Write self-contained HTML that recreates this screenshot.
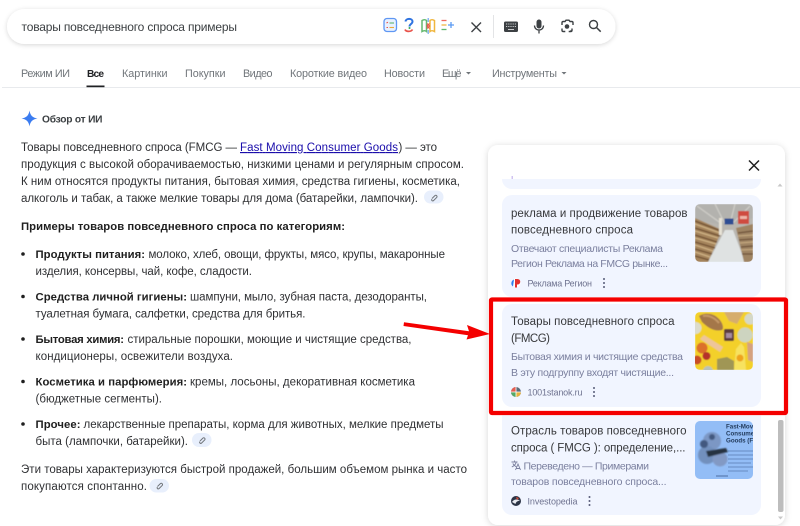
<!DOCTYPE html>
<html lang="ru"><head><meta charset="utf-8"><title>товары повседневного спроса примеры</title>
<style>
html,body{margin:0;padding:0;background:#fff;width:800px;height:526px;overflow:hidden}
svg{display:block;position:absolute;left:0;top:0;filter:blur(.3px)}
text{font-family:"Liberation Sans",sans-serif;white-space:pre}
.s{font-size:12px;fill:#3c4043}
.t{font-size:10.8px;fill:#70757a}
.b{font-size:11.5px;fill:#2f3033}
.h{font-size:11.3px;fill:#1f1f1f;font-weight:700}
.c{font-size:11.5px;fill:#37383b}
.d{font-size:10.5px;fill:#7a7f9e}
.o{font-size:9px;fill:#6f7390}
</style></head><body>
<svg width="800" height="526" viewBox="0 0 800 526" xmlns="http://www.w3.org/2000/svg">
<defs>
<filter id="sh" x="-10%" y="-30%" width="120%" height="170%"><feDropShadow dx="0" dy="1" stdDeviation="2.500" flood-color="#000" flood-opacity=".16"/></filter>
<filter id="sh2" x="-10%" y="-10%" width="120%" height="120%"><feDropShadow dx="0" dy="1" stdDeviation="3.500" flood-color="#000" flood-opacity=".16"/></filter>
<filter id="bl"><feGaussianBlur stdDeviation=".7"/></filter>
<filter id="bs"><feGaussianBlur stdDeviation=".45"/></filter>
<clipPath id="c1"><rect x="695" y="204" width="58" height="58" rx="5"/></clipPath>
<clipPath id="c2"><rect x="695" y="312" width="58" height="58" rx="5"/></clipPath>
<clipPath id="c3"><rect x="695" y="421" width="58" height="58" rx="5"/></clipPath>
<clipPath id="c0"><rect x="488" y="179" width="297" height="346"/></clipPath>
</defs>
<rect width="800" height="526" fill="#fff"/>

<!-- search bar -->
<rect x="7" y="9" width="608.500" height="35" rx="17.500" fill="#fff" filter="url(#sh)"/>
<text class="s" x="21.500" y="31" textLength="215.500">товары повседневного спроса примеры</text>

<!-- AI chips -->
<rect x="384" y="18.500" width="12.500" height="13" rx="3" fill="#e8f1ff" stroke="#5f97f3" stroke-width="1.300"/>
<path d="M386.500 23l1.500-.8M386.500 27.500h1.500" stroke="#e8574d" stroke-width="1.100" fill="none"/>
<path d="M389.500 23h4.500" stroke="#5fb36e" stroke-width="1.100" fill="none"/>
<path d="M389.500 27.500h4.500" stroke="#e9a93a" stroke-width="1.100" fill="none"/>
<path d="M405.500 21.500c.3-3.500 7-3.500 7 0 0 2.500-3 2.500-3 5" fill="none" stroke="#2f73e0" stroke-width="2"/>
<path d="M405 29.500c1 2.500 6 2.500 7.500 0" fill="none" stroke="#e8524a" stroke-width="1.700"/>
<circle cx="409.500" cy="28" r="1" fill="#34a853"/>
<path d="M422 20.500c2-1.200 3-1.200 4.500 0v11c-1.500-1.200-2.500-1.200-4.500 0z" fill="none" stroke="#65b96f" stroke-width="1.500"/>
<path d="M434.500 20.500c-2-1.200-3-1.200-4.500 0v11c1.500-1.200 2.500-1.200 4.500 0z" fill="none" stroke="#f0b63e" stroke-width="1.500"/>
<path d="M427 23.500l2.500 2.500-2.500 2.500M429.500 23.500l-2.500 2.500 2.500 2.500" fill="none" stroke="#e8574d" stroke-width="1.200"/>
<path d="M428.200 18v4M428.200 30v4" stroke="#6ea6f5" stroke-width="1.200"/>
<path d="M441.500 20.500h5" stroke="#ef6a5e" stroke-width="1.300"/>
<path d="M441.500 25h5" stroke="#f1b845" stroke-width="1.300"/>
<path d="M441.500 29.500h5" stroke="#5fb86d" stroke-width="1.300"/>
<path d="M448 25h6M451 22v6" stroke="#5a9bf3" stroke-width="1.300"/>

<!-- right controls -->
<path d="M471.500 22.500l9.500 9.500M481 22.500l-9.500 9.500" stroke="#3c4043" stroke-width="1.400"/>
<path d="M493.500 15v23" stroke="#e3e4e6" stroke-width="1"/>
<rect x="504" y="21.500" width="14" height="10.500" rx="1.500" fill="#3c4043"/>
<path d="M506 24h10M506 26.500h10" stroke="#c9cacc" stroke-width="1" stroke-dasharray="1 .8"/>
<path d="M508 29.500h6" stroke="#c9cacc" stroke-width="1"/>
<rect x="536.500" y="19.500" width="5" height="9" rx="2.500" fill="#3c4043"/>
<path d="M534.500 25.500c0 6 9 6 9 0M539 30.500v3" fill="none" stroke="#3c4043" stroke-width="1.300"/>
<path d="M562 25v-2.200c0-.7.500-1.300 1.300-1.300h1.700l1-1.300h3l1 1.300h1.700c.8 0 1.300.6 1.300 1.300v2.200M562 28.500v1.700c0 .8.500 1.300 1.300 1.300h2M572 28.500v1.700c0 .8-.5 1.300-1.300 1.300h-2" fill="none" stroke="#3c4043" stroke-width="1.400"/>
<circle cx="567" cy="26.500" r="2.300" fill="#3c4043"/>
<circle cx="571" cy="31" r=".9" fill="#3c4043"/>
<circle cx="593.500" cy="24.500" r="4" fill="none" stroke="#3c4043" stroke-width="1.400"/>
<path d="M596.500 27.500l4.200 4.200" stroke="#3c4043" stroke-width="1.500"/>

<!-- tabs -->
<text class="t" x="21" y="77" textLength="49">Режим ИИ</text>
<text x="87" y="77" textLength="17" style="font-size:10.200px;fill:#202124;font-weight:700">Все</text>
<text class="t" x="122" y="77" textLength="45.500">Картинки</text>
<text class="t" x="185" y="77" textLength="40.500">Покупки</text>
<text class="t" x="243" y="77" textLength="29.500">Видео</text>
<text class="t" x="290" y="77" textLength="77">Короткие видео</text>
<text class="t" x="384" y="77" textLength="41">Новости</text>
<text class="t" x="442" y="77" textLength="19.500">Ещё</text>
<path d="M466 72h5l-2.500 2.500z" fill="#70757a"/>
<text class="t" x="492" y="77" textLength="65">Инструменты</text>
<path d="M561.500 72h5l-2.500 2.500z" fill="#70757a"/>
<path d="M2 87.500H800" stroke="#e8eaed" stroke-width="1"/>
<rect x="86.500" y="85.500" width="18" height="1.700" fill="#202124"/>

<!-- AI overview -->
<path d="M29.500 110.500C30.300 115.500 32.500 117.700 37.500 118.500 32.500 119.300 30.300 121.500 29.500 126.500 28.700 121.500 26.500 119.300 21.500 118.500 26.500 117.700 28.700 115.500 29.500 110.500z" fill="#3b7cf0"/>
<text x="42" y="122.500" textLength="60.500" style="font-size:10.200px;font-weight:700;fill:#3c4043">Обзор от ИИ</text>

<!-- body -->
<text class="b" x="21" y="151" textLength="216">Товары повседневного спроса (FMCG —</text>
<text class="b" x="240" y="151" textLength="158" style="fill:#1a0dab" text-decoration="underline">Fast Moving Consumer Goods</text>
<text class="b" x="398.500" y="151" textLength="38.500">) — это</text>
<text class="b" x="21" y="168" textLength="443">продукция с высокой оборачиваемостью, низкими ценами и регулярным спросом.</text>
<text class="b" x="21" y="185" textLength="439">К ним относятся продукты питания, бытовая химия, средства гигиены, косметика,</text>
<text class="b" x="21" y="202" textLength="397">алкоголь и табак, а также мелкие товары для дома (батарейки, лампочки).</text>
<rect x="424" y="190.500" width="19.500" height="13" rx="6.500" fill="#e8effc"/>
<path d="M432 198.500l3-3a1.300 1.300 0 0 1 1.800 1.800l-3.300 3.300a1 1 0 0 1-1.500-1.500" fill="none" stroke="#70757a" stroke-width="1"/>

<text class="h" x="21" y="230" textLength="324">Примеры товаров повседневного спроса по категориям:</text>

<circle cx="23" cy="254" r="1.800" fill="#1f1f1f"/>
<text class="h" x="35.500" y="258" textLength="109.500">Продукты питания:</text>
<text class="b" x="148.500" y="258" textLength="296.500">молоко, хлеб, овощи, фрукты, мясо, крупы, макаронные</text>
<text class="b" x="35.500" y="275" textLength="216.500">изделия, консервы, чай, кофе, сладости.</text>

<circle cx="23" cy="296.500" r="1.800" fill="#1f1f1f"/>
<text class="h" x="35.500" y="300.500" textLength="151.500">Средства личной гигиены:</text>
<text class="b" x="190" y="300.500" textLength="237">шампуни, мыло, зубная паста, дезодоранты,</text>
<text class="b" x="35.500" y="317.500" textLength="270">туалетная бумага, салфетки, средства для бритья.</text>

<circle cx="23" cy="339" r="1.800" fill="#1f1f1f"/>
<text class="h" x="35.500" y="343" textLength="88.500">Бытовая химия:</text>
<text class="b" x="127.500" y="343" textLength="284">стиральные порошки, моющие и чистящие средства,</text>
<text class="b" x="35.500" y="360" textLength="197.500">кондиционеры, освежители воздуха.</text>

<circle cx="23" cy="381.500" r="1.800" fill="#1f1f1f"/>
<text class="h" x="35.500" y="385.500" textLength="151.500">Косметика и парфюмерия:</text>
<text class="b" x="190" y="385.500" textLength="225">кремы, лосьоны, декоративная косметика</text>
<text class="b" x="35.500" y="402.500" textLength="126.500">(бюджетные сегменты).</text>

<circle cx="23" cy="424" r="1.800" fill="#1f1f1f"/>
<text class="h" x="35.500" y="428" textLength="45">Прочее:</text>
<text class="b" x="83.500" y="428" textLength="360">лекарственные препараты, корма для животных, мелкие предметы</text>
<text class="b" x="35.500" y="445" textLength="152.500">быта (лампочки, батарейки).</text>
<rect x="192" y="433" width="19.500" height="14" rx="7" fill="#e8effc"/>
<path d="M200 441l3-3a1.300 1.300 0 0 1 1.800 1.800l-3.300 3.300a1 1 0 0 1-1.500-1.500" fill="none" stroke="#70757a" stroke-width="1"/>

<text class="b" x="21" y="473" textLength="446">Эти товары характеризуются быстрой продажей, большим объемом рынка и часто</text>
<text class="b" x="21" y="490" textLength="126">покупаются спонтанно.</text>
<rect x="149.500" y="479" width="19.500" height="13.500" rx="6.700" fill="#e8effc"/>
<path d="M157.500 486.500l3-3a1.300 1.300 0 0 1 1.800 1.800l-3.300 3.300a1 1 0 0 1-1.500-1.500" fill="none" stroke="#70757a" stroke-width="1"/>

<!-- panel -->
<rect x="488" y="145" width="297" height="380" rx="10" fill="#fff" filter="url(#sh2)"/>
<path d="M749 160.500l10 10M759 160.500l-10 10" stroke="#1f1f1f" stroke-width="1.500"/>

<!-- cards -->
<g clip-path="url(#c0)">
<rect x="502" y="150" width="259" height="39" rx="10" fill="#f1f5ff"/>
</g>
<rect x="511.500" y="176" width="1.500" height="3" fill="#cbbcf0" opacity=".9"/>
<path d="M780 183.500l-2.500 3h5z" fill="#c8c8c8"/>

<!-- card 2 -->
<rect x="502" y="195" width="259" height="102" rx="10" fill="#f1f5ff"/>
<text class="c" x="511" y="217" textLength="176.500">реклама и продвижение товаров</text>
<text class="c" x="511" y="233.500" textLength="122">повседневного спроса</text>
<text class="d" x="511" y="252" textLength="152">Отвечают специалисты Реклама</text>
<text class="d" x="511" y="267" textLength="157">Регион Реклама на FMCG рынке...</text>
<circle cx="516" cy="283" r="4.500" fill="#fff"/>
<path d="M514 279.500a4 4 0 0 0-1 7z" fill="#2f80ed"/>
<path d="M515 279h2.500a2.500 2.500 0 0 1 0 5.500H517v3h-2z" fill="#e3312d"/>
<text class="o" x="527.500" y="286.500" textLength="64.500">Реклама Регион</text>
<g fill="#565a78"><circle cx="604" cy="279" r="1"/><circle cx="604" cy="283" r="1"/><circle cx="604" cy="287" r="1"/></g>
<g clip-path="url(#c1)">
<g filter="url(#bs)">
<rect x="695" y="204" width="58" height="58" fill="#b9b6b0"/>
<path d="M695 204h58v14l-24 8-34-6z" fill="#b3b2ae"/>
<path d="M697 206l25 18M715 204l10 20M735 204l-5 20M750 206l-18 18" stroke="#cfcdc8" stroke-width="1.200"/>
<path d="M708 262l17-32h8l12 32z" fill="#dfe2e2"/>
<path d="M695 218l27 12-14 32h-13z" fill="#a5845c"/>
<path d="M695 221l26 10M695 228l25 8M695 235l22 7M695 242l20 6M695 249l17 5M695 256l14 4" stroke="#6f4f32" stroke-width="1.300"/>
<path d="M695 224l25 9M695 231l23 7M695 238l21 6M695 245l18 6M695 252l15 5" stroke="#d5b98b" stroke-width="1.100"/>
<path d="M736 228l17-4v38h-9z" fill="#9f8464"/>
<path d="M738 233l15-2M739 240l14-1M741 247l12-1M742 254l11 0" stroke="#6d5139" stroke-width="1.300"/>
<path d="M738 236l15-1M740 243l13-1M741 250l12-.5" stroke="#c9ad83" stroke-width="1.100"/>
<rect x="719" y="218" width="3" height="17" fill="#e7e2d6"/>
<rect x="724.500" y="218.500" width="9" height="6" fill="#2d4d93"/>
<rect x="738" y="211" width="11" height="13" fill="#cf4b3f"/>
<rect x="740" y="216" width="7" height="3" fill="#eeb5a8"/>
</g>
</g>

<!-- red box -->
<rect x="491" y="299.500" width="295" height="113.500" fill="#fff" stroke="#f40000" stroke-width="4.200" rx="1"/>
<rect x="502" y="304" width="259" height="103" rx="10" fill="#f1f5ff"/>
<text class="c" x="511" y="325" textLength="163.500">Товары повседневного спроса</text>
<text class="c" x="511" y="342" textLength="39">(FMCG)</text>
<text class="d" x="511" y="360" textLength="172">Бытовая химия и чистящие средства</text>
<text class="d" x="511" y="376" textLength="163">В эту подгруппу входят чистящие...</text>
<circle cx="516" cy="392" r="5" fill="#5d6d7b"/>
<path d="M511 392a5 5 0 0 1 5-5v5z" fill="#e65c4f"/><path d="M516 392h5a5 5 0 0 1-5 5z" fill="#e8b23e"/><path d="M516 392v5a5 5 0 0 1-5-5z" fill="#56a866"/>
<path d="M511 392h10M516 387v10" stroke="#fff" stroke-width=".8"/>
<text class="o" x="527.500" y="395.500" textLength="55">1001stanok.ru</text>
<g fill="#565a78"><circle cx="594" cy="388" r="1"/><circle cx="594" cy="392" r="1"/><circle cx="594" cy="396" r="1"/></g>
<g clip-path="url(#c2)">
<g filter="url(#bs)">
<rect x="695" y="312" width="58" height="58" fill="#f3d02a"/>
<path d="M699 316c4-3 14-4 20 3 4 4 5 10 3 11-7 2-14-2-20-8z" fill="#a47748"/>
<path d="M703 316c5-1 11 1 16 7" stroke="#c69a68" stroke-width="2" fill="none"/>
<path d="M724 312h20l-7 12-8-3z" fill="#d6ad6d"/>
<circle cx="750" cy="319" r="5.500" fill="#d5d8c8"/>
<circle cx="695.500" cy="328" r="6" fill="#dcdccc"/>
<rect x="724" y="329" width="10" height="12" rx="1.500" fill="#5d3c3a"/>
<rect x="726" y="333" width="6" height="5" fill="#a58aa0"/>
<circle cx="745" cy="335" r="7.500" fill="#cdd4c0"/>
<path d="M704 335l19 12-3 5-20-13z" fill="#eec59a"/>
<circle cx="702" cy="348" r="5.500" fill="#dc6f2c"/>
<circle cx="706.500" cy="356" r="4" fill="#b5322a"/>
<circle cx="697" cy="360" r="4.500" fill="#c84d28"/>
<path d="M717 359l10-2 7 4v9h-17z" fill="#a09655"/>
<path d="M736 349l5-6 3 4 2 23h-12z" fill="#f7e25f"/>
<circle cx="740" cy="358" r="3.500" fill="#efa31a"/>
<path d="M747 342l6 2v18l-5-2z" fill="#d5a27f"/>
<circle cx="708" cy="371" r="5" fill="#b9c2b8"/>
</g>
</g>

<!-- card 4 -->
<g clip-path="url(#c0)">
<path d="M502 415.500h259V505a10 10 0 0 1-10 10H512a10 10 0 0 1-10-10z" fill="#f1f5ff"/>
</g>
<text class="c" x="511" y="434.500" textLength="175.500">Отрасль товаров повседневного</text>
<text class="c" x="511" y="451.500" textLength="174.500">спроса ( FMCG ): определение,...</text>
<g fill="none" stroke="#7a7f9e" stroke-width=".9"><path d="M511.500 462h6M514.500 460.500v1.500M516.300 462c-.5 2.500-2.500 4-4.500 5M512.800 463.500c.8 1.500 2 2.500 3.500 3.300"/><path d="M515.500 470l2.500-6 2.500 6M516.300 468.500h3.500"/></g>
<text class="d" x="523.500" y="469.500" textLength="125.500">Переведено — Примерами</text>
<text class="d" x="511" y="485" textLength="155.500">товаров повседневного спроса...</text>
<circle cx="516" cy="501" r="5" fill="#2c3446"/>
<path d="M512 502c2-3 5-3 8-1.500-2 .5-4 1-4.500 3.500z" fill="#e8eaf0"/>
<path d="M516 497l3 1-2 2z" fill="#d24a36"/>
<text class="o" x="527.500" y="504.500" textLength="50">Investopedia</text>
<g fill="#565a78"><circle cx="589.500" cy="497" r="1"/><circle cx="589.500" cy="501" r="1"/><circle cx="589.500" cy="505" r="1"/></g>
<g clip-path="url(#c3)">
<rect x="695" y="421" width="58" height="58" fill="#93bdf6"/>
<g filter="url(#bl)">
<circle cx="712" cy="441" r="9" fill="#7c97c4"/>
<circle cx="707" cy="455" r="9" fill="#7290bd"/>
<circle cx="720" cy="459" r="7.500" fill="#8299c4"/>
<circle cx="704" cy="444" r="4" fill="#42597f"/>
<circle cx="712" cy="437" r="3" fill="#42597f"/>
<path d="M706 451l20-3 2 4-20 5z" fill="#26323f"/>
</g>
<text x="726" y="428.500" style="font-size:6.200px;font-weight:700;fill:#233b5c">Fast-Movir</text>
<text x="726" y="435.500" style="font-size:6.200px;font-weight:700;fill:#233b5c">Consumer</text>
<text x="726" y="442.500" style="font-size:6.200px;font-weight:700;fill:#233b5c">Goods (FM</text>
<g stroke="#46669a" stroke-width=".8" opacity=".75"><path d="M728 451h25M728 455h25M728 459h25M728 463h23M728 467h25M728 471h20"/><path d="M716 476h12" stroke-width="1.200"/></g>
</g>

<!-- scrollbar -->
<rect x="778" y="420" width="5.500" height="92" rx="2" fill="#bdbdbd"/>
<path d="M780.500 519.500l-2.500-3h5z" fill="#c8c8c8"/>

<!-- arrow -->
<path d="M404 322.300 469 331.300 467 325 490 334 466.500 339.500 468 335.300 403.500 326z" fill="#f40000"/>
</svg>
</body></html>
